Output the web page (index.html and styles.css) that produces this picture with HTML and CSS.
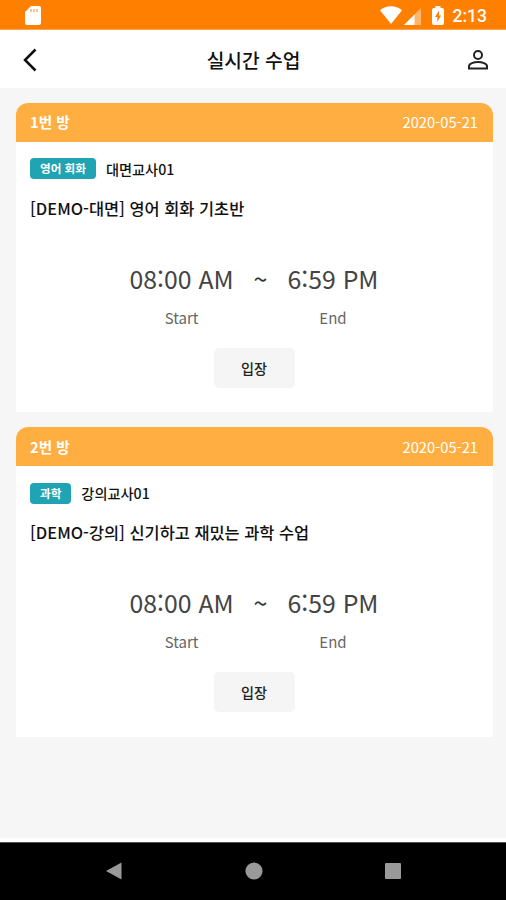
FILE: index.html
```html
<!DOCTYPE html>
<html lang="ko">
<head>
    <meta charset="UTF-8">
    <meta name="viewport" content="width=device-width, initial-scale=1.0">
    <title>실시간 수업</title>
    <link rel="stylesheet" href="styles.css">
</head>
<body>
    <div class="status-bar">
        <svg class="sd-icon" width="16" height="20" viewBox="0 0 16 20">
            <path d="M6 0h8a2 2 0 0 1 2 2v15a2 2 0 0 1-2 2H2a2 2 0 0 1-2-2V6z" fill="#fff"/>
            <path d="M6 3v3M9 3v3M12 3v3" stroke="#ffb469" stroke-width="1.6"/>
        </svg>
        <div class="status-right">
            <svg class="wifi-icon" width="22" height="18" viewBox="0 0 22 18">
                <path d="M0 4.2C6-1.2 16-1.2 22 4.2L11 18z" fill="#fff"/>
            </svg>
            <svg class="signal-icon" width="17" height="17" viewBox="0 0 17 17">
                <path d="M17 0v17H0z" fill="#ffb66d"/>
                <path d="M10.5 6.5V17H0z" fill="#fff"/>
            </svg>
            <svg class="battery-icon" width="12" height="19" viewBox="0 0 12 19">
                <path d="M3.5 0h5v2H10a2 2 0 0 1 2 2v13a2 2 0 0 1-2 2H2a2 2 0 0 1-2-2V4a2 2 0 0 1 2-2h1.500z" fill="#fff"/>
                <path d="M7 4.500L3 11h2.300v5L9 9.500H7z" fill="#ff8000"/>
            </svg>
            <span class="clock">2:13</span>
        </div>
    </div>

    <header class="top-bar">
        <svg width="14" height="24" viewBox="0 0 14 24">
            <path d="M12.500 1.500L2 12l10.500 10.500" fill="none" stroke="#111" stroke-width="2.500"/>
        </svg>
        <h1 class="page-title">실시간 수업</h1>
        <svg width="20" height="20" viewBox="0 0 20 20" fill="none" stroke="#222" stroke-width="2">
            <circle cx="10" cy="5" r="4"/>
            <path d="M1 18.500v-2.300c0-2.600 5-4.200 9-4.200s9 1.600 9 4.200v2.300z"/>
        </svg>
    </header>

    <main class="class-list">
        <section class="card">
            <div class="card-header">
                <span class="room">1번 방</span>
                <span class="date">2020-05-21</span>
            </div>
            <div class="card-body">
                <div class="teacher-row">
                    <span class="badge">영어 회화</span>
                    <span class="teacher">대면교사01</span>
                </div>
                <p class="class-name">[DEMO-대면] 영어 회화 기초반</p>
                <div class="time-row">
                    <div class="time-box">
                        <p class="time">08:00 AM</p>
                        <p class="time-label">Start</p>
                    </div>
                    <span class="tilde">~</span>
                    <div class="time-box">
                        <p class="time">6:59 PM</p>
                        <p class="time-label">End</p>
                    </div>
                </div>
                <button class="enter-btn">입장</button>
            </div>
        </section>

        <section class="card">
            <div class="card-header">
                <span class="room">2번 방</span>
                <span class="date">2020-05-21</span>
            </div>
            <div class="card-body">
                <div class="teacher-row">
                    <span class="badge">과학</span>
                    <span class="teacher">강의교사01</span>
                </div>
                <p class="class-name">[DEMO-강의] 신기하고 재밌는 과학 수업</p>
                <div class="time-row">
                    <div class="time-box">
                        <p class="time">08:00 AM</p>
                        <p class="time-label">Start</p>
                    </div>
                    <span class="tilde">~</span>
                    <div class="time-box">
                        <p class="time">6:59 PM</p>
                        <p class="time-label">End</p>
                    </div>
                </div>
                <button class="enter-btn">입장</button>
            </div>
        </section>
    </main>

    <nav class="nav-bar">
        <svg width="16" height="18" viewBox="0 0 16 18"><path d="M15.500 .5v17L0 9z" fill="#999"/></svg>
        <svg width="18" height="18" viewBox="0 0 18 18"><circle cx="9" cy="9" r="8.600" fill="#999"/></svg>
        <svg width="16" height="16" viewBox="0 0 16 16"><rect width="16" height="16" rx="1" fill="#999"/></svg>
    </nav>
</body>
</html>
```

FILE: styles.css
```css
* {
    box-sizing: border-box;
}

body {
    margin: 0;
    height: 900px;
    display: flex;
    flex-direction: column;
    background: #f6f6f6;
    color: #111;
    font-family: "Noto Sans CJK KR", sans-serif;
    overflow: hidden;
}

p, h1 {
    margin: 0;
}

svg {
    display: block;
    flex: none;
}

.status-bar {
    height: 30px;
    padding: 0 19px 0 25px;
    display: flex;
    justify-content: space-between;
    background: #ff8000;
    border-bottom: 1px solid #ffa64d;
}

.sd-icon {
    margin-top: 6px;
}

.status-right {
    display: flex;
    align-items: flex-start;
}

.wifi-icon {
    margin: 6px 2px 0 0;
}

.signal-icon {
    margin: 8px 11px 0 0;
}

.battery-icon {
    margin: 6px 9px 0 0;
}

.clock {
    font-family: Roboto, sans-serif;
    font-size: 17.500px;
    font-weight: 500;
    line-height: 33px;
    color: #fff;
}

.top-bar {
    height: 58px;
    padding: 1px 18px 0 23px;
    display: flex;
    align-items: center;
    justify-content: space-between;
    background: #fff;
}

.page-title {
    padding-left: 2px;
    font-size: 19.200px;
    font-weight: 500;
    line-height: 28px;
}

.class-list {
    flex: 1;
    padding: 14.500px 13px 0 16px;
    display: flex;
    flex-direction: column;
    gap: 15px;
    border-bottom: 4px solid #fff;
}

.card {
    height: 309.500px;
    background: #fff;
    border-radius: 12px 12px 0 0;
    overflow: hidden;
}

.card-header {
    height: 39px;
    padding: 0 15px 1px 14px;
    display: flex;
    align-items: center;
    justify-content: space-between;
    background: #ffae42;
    color: #fff;
    font-size: 14.700px;
}

.room {
    font-weight: 700;
}

.date {
    font-weight: 400;
}

.card-body {
    padding: 16px 15px 0 14px;
}

.teacher-row {
    display: flex;
    align-items: center;
    gap: 10px;
}

.badge {
    height: 21px;
    padding: 0 10px;
    background: #20a4b3;
    border-radius: 4px;
    color: #fff;
    font-size: 11.600px;
    font-weight: 700;
    line-height: 21px;
}

.teacher {
    font-size: 14.200px;
    font-weight: 500;
    line-height: 22px;
}

.class-name {
    margin-top: 16px;
    font-size: 16.400px;
    font-weight: 500;
    line-height: 24px;
}

.time-row {
    margin-top: 39px;
    display: flex;
    justify-content: center;
    gap: 20px;
}

.time-box {
    text-align: center;
}

.time {
    color: #444;
    font-size: 24.800px;
    line-height: 38px;
}

.time-label {
    margin-top: 10px;
    color: #666;
    font-size: 15px;
    line-height: 22px;
}

.tilde {
    color: #333;
    font-size: 25px;
    line-height: 38px;
}

.enter-btn {
    display: block;
    width: 81px;
    height: 40px;
    margin: 19px auto 0;
    padding: 0;
    background: #f5f5f5;
    border: none;
    border-radius: 5px;
    color: #222;
    font-family: inherit;
    font-size: 14.200px;
    font-weight: 500;
}

.nav-bar {
    height: 58px;
    padding: 0 105px 2px 106px;
    display: flex;
    align-items: center;
    justify-content: space-between;
    background: #000;
    border-top: 1px solid #555;
}
```
